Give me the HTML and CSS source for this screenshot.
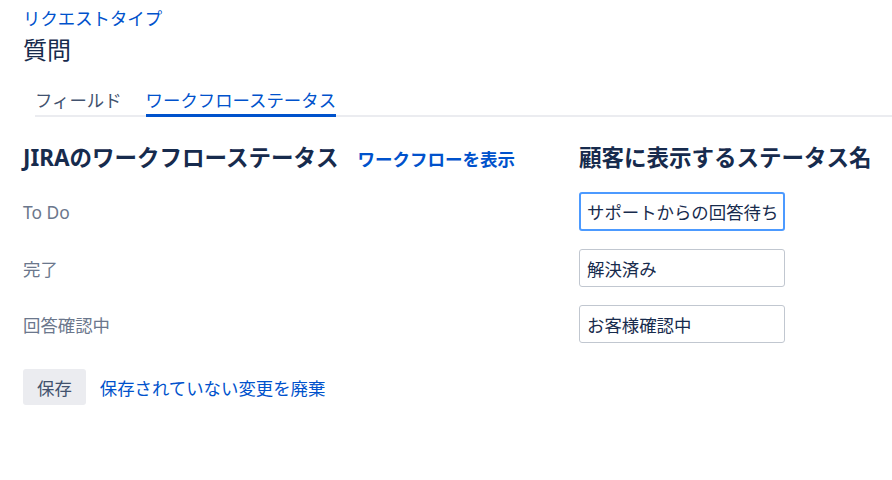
FILE: index.html
```html
<!DOCTYPE html>
<html lang="ja">

<head>
  <meta charset="UTF-8">
  <meta name="viewport" content="width=device-width, initial-scale=1.0">
  <link rel="stylesheet" href="styles.css">
  <title>質問 - ワークフローステータス</title>
</head>

<body>
  <div class="page">
    <a class="crumb" href="#">リクエストタイプ</a>
    <h1 class="title">質問</h1>

    <div class="tabs">
      <a class="tab" href="#">フィールド</a>
      <a class="tab active" href="#">ワークフローステータス</a>
    </div>

    <div class="status">
      <div class="head">
        <div class="col-left">
          <h2>JIRAのワークフローステータス</h2>
          <a class="view" href="#">ワークフローを表示</a>
        </div>
        <div class="col-right">
          <h2>顧客に表示するステータス名</h2>
        </div>
      </div>

      <div class="row">
        <div class="col-left name">To Do</div>
        <div class="col-right"><input class="field focus" type="text" value="サポートからの回答待ち"></div>
      </div>
      <div class="row">
        <div class="col-left name">完了</div>
        <div class="col-right"><input class="field" type="text" value="解決済み"></div>
      </div>
      <div class="row">
        <div class="col-left name">回答確認中</div>
        <div class="col-right"><input class="field" type="text" value="お客様確認中"></div>
      </div>

      <div class="actions">
        <button class="btn" type="button">保存</button>
        <a class="discard" href="#">保存されていない変更を廃棄</a>
      </div>
    </div>
  </div>
</body>

</html>
```

FILE: styles.css
```css
:root {
  --left-width: 556px;
  --blue: #0052cc;
  --text: #172b4d;
  --muted: #6b778c;
}

html {
  height: 100%;
}

body {
  height: 100%;
  margin: 0;
  background-color: #fff;
  color: var(--text);
  font-family: "Noto Sans", "Noto Sans CJK JP", sans-serif;
  font-size: 17.4px;
}

a {
  color: var(--blue);
  text-decoration: none;
}

.page {
  padding: 6px 0 0 23px;
}

.crumb {
  display: block;
  line-height: 24px;
}

.title {
  margin: 4px 0 0;
  font-size: 24px;
  font-weight: normal;
  line-height: 32px;
}

/* タブ */
.tabs {
  display: flex;
  gap: 24px;
  margin: 21px 0 0 12px;
  border-bottom: 2px solid #ebecf0;
}

.tabs .tab {
  color: #42526e;
  line-height: 26px;
  padding-bottom: 1px;
  margin-bottom: -2px;
  border-bottom: 3px solid transparent;
}

.tabs .tab.active {
  color: var(--blue);
  border-bottom-color: var(--blue);
}

/* ステータス一覧 */
.status {
  padding-top: 27px;
}

.head,
.row {
  display: flex;
  align-items: center;
}

.col-left {
  width: var(--left-width);
  flex-shrink: 0;
}

.head .col-left {
  display: flex;
  align-items: baseline;
  gap: 19px;
}

.head h2 {
  margin: 0;
  font-size: 22.5px;
  line-height: 28px;
  font-weight: bold;
}

.head .view {
  font-weight: bold;
  font-size: 17.5px;
}

.row {
  margin-top: 18px;
}

.head + .row {
  margin-top: 20px;
}

.name {
  color: var(--muted);
}

.field {
  box-sizing: border-box;
  width: 206px;
  height: 38px;
  padding: 0 7px;
  border: 1px solid #c1c7d0;
  border-radius: 3px;
  font-family: inherit;
  font-size: 17.4px;
  color: var(--text);
  background-color: #fff;
}

.field.focus {
  height: 39px;
  border: 2px solid #4c9aff;
  padding: 0 6px;
}

.actions {
  display: flex;
  align-items: center;
  gap: 14px;
  margin-top: 26px;
}

.btn {
  height: 36px;
  padding: 0 14px;
  border: none;
  border-radius: 3px;
  background-color: #ebecf0;
  color: #42526e;
  font-family: inherit;
  font-size: 17.4px;
}
```
